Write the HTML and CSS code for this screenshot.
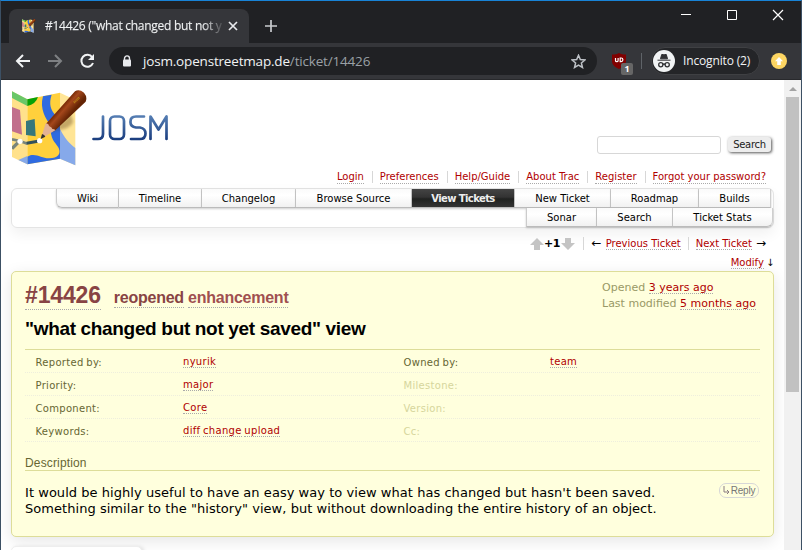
FILE: index.html
```html
<!DOCTYPE html>
<html lang="en"><head><meta charset="utf-8"><title>#14426 ("what changed but not yet saved" view) – JOSM</title><link rel="stylesheet" href="styles.css"></head>
<body>
<div class="window">
<header class="tabstrip">
  <div class="tab">
    <svg class="favicon" viewBox="0 0 76 77"><use href="#map"/></svg>
    <span class="tab-title">#14426 ("what changed but not y</span>
    <svg class="tab-close" viewBox="0 0 10 10"><path d="M1 1l8 8M9 1L1 9" stroke="#e8eaed" stroke-width="1.7"/></svg>
  </div>
  <svg class="plus" viewBox="0 0 12 12"><path d="M6 0v12M0 6h12" stroke="#c9cbce" stroke-width="1.7"/></svg>
  <div class="controls">
    <svg viewBox="0 0 12 12"><path d="M1 5.5h10" stroke="#fff"/></svg>
    <svg viewBox="0 0 12 12"><path d="M1.5 1.5h9v9h-9z" fill="none" stroke="#fff"/></svg>
    <svg viewBox="0 0 12 12"><path d="M1 1l10 10M11 1L1 11" stroke="#fff" stroke-width="1.2"/></svg>
  </div>
</header>
<div class="toolbar">
  <svg class="nav-i" viewBox="0 0 16 16"><path d="M15 8H2M8 2L2 8l6 6" fill="none" stroke="#f1f3f4" stroke-width="2"/></svg>
  <svg class="nav-i" viewBox="0 0 16 16"><path d="M1 8h13M8 2l6 6-6 6" fill="none" stroke="#7e8083" stroke-width="2"/></svg>
  <svg class="nav-i" viewBox="0 0 16 16"><path d="M13.2 4.2A6 6 0 1 0 14 10" fill="none" stroke="#f1f3f4" stroke-width="2"/><path d="M15 1v6H9z" fill="#f1f3f4"/></svg>
  <div class="omnibox">
    <svg class="lock" viewBox="0 0 10 12"><path d="M2.5 5V3.4a2.5 2.5 0 0 1 5 0V5" fill="none" stroke="#e8eaed" stroke-width="1.4"/><rect x="1" y="4.5" width="8" height="7" rx="1" fill="#e8eaed"/></svg>
    <span class="url">josm.openstreetmap.de<i>/ticket/14426</i></span>
    <svg class="star" viewBox="0 0 14 14"><path d="M7 1.2l1.7 4 4.3.4-3.3 2.8 1 4.2L7 10.4l-3.7 2.2 1-4.2L1 5.6l4.3-.4z" fill="none" stroke="#bdc1c6" stroke-width="1.4"/></svg>
  </div>
  <div class="shield">
    <svg viewBox="0 0 14 16"><path d="M7 0c2 1.2 4 1.6 7 1.6V8c0 4-3 6-7 8-4-2-7-4-7-8V1.6C3 1.6 5 1.2 7 0z" fill="#800000"/><path d="M3.500 5v2.400a1.300 1.300 0 0 0 2.600 0V5M8.200 4.400v4.200h.9a1.800 1.800 0 0 0 0-3.600h-.9" fill="none" stroke="#fff" stroke-width="1.200"/></svg>
    <b>1</b>
  </div>
  <i class="divider"></i>
  <div class="incognito">
    <svg viewBox="0 0 22 22"><circle cx="11" cy="11" r="11" fill="#f1f3f4"/><path d="M7.500 8.800l1.200-4.300h1.400l.9.400.9-.4h1.400l1.200 4.300zM4.500 10.200h13" fill="#303134" stroke="#303134"/><g fill="none" stroke="#303134" stroke-width="1.300"><circle cx="7.800" cy="14.700" r="2.100"/><circle cx="14.200" cy="14.700" r="2.100"/><path d="M9.800 14.300q1.200-.6 2.400 0"/></g></svg>
    <span>Incognito (2)</span>
  </div>
  <svg class="update" viewBox="0 0 16 16"><circle cx="8" cy="8" r="8" fill="#fdd663"/><path d="M8 4l4 4.3H9.800V12H6.200V8.300H4z" fill="#fff"/></svg>
</div>
<div class="viewport">
<main class="page">
  <div class="banner">
    <svg class="logo" viewBox="0 0 158 77">
      <defs>
        <linearGradient id="pen" gradientUnits="userSpaceOnUse" x1="150" y1="50" x2="182" y2="78"><stop offset="0" stop-color="#a8481a"/><stop offset=".2" stop-color="#7c2d08"/><stop offset=".45" stop-color="#a4471b"/><stop offset="1" stop-color="#642404"/></linearGradient>
        <linearGradient id="word" gradientUnits="userSpaceOnUse" x1="0" y1="25" x2="0" y2="51"><stop offset="0" stop-color="#5780b5"/><stop offset="1" stop-color="#173a7c"/></linearGradient>
        <filter id="soft" x="-30%" y="-30%" width="160%" height="160%"><feGaussianBlur stdDeviation="4"/></filter>
        <g id="map" transform="scale(.3333) translate(-6 -6)">
          <path d="M6 10l46 24v195L6 207z" fill="#ffe18b"/><path d="M52 34l98-20v198l-98 17z" fill="#ffd03c"/><path d="M150 14l46 22v196l-46-20z" fill="#ffe596"/>
          <path d="M6 10l46 24v20L6 30z" fill="#69c768"/><path d="M52 34l32-7q-7 22-32 27z" fill="#07a107"/>
          <path d="M6 57l24 9 6 74-30-10z" fill="#c16f8c"/><path d="M48 99l26-6 3 52-29-4z" fill="#36777b"/>
          <path d="M99 25L125 20C116 48 122 65 136 81L150 95V130L120 110C108 92 88 64 99 25z" fill="#2f6be0"/>
          <path d="M122 128L150 120V212L52 229V206C76 192 94 212 118 211C144 210 154 198 146 180C140 166 124 160 122 128z" fill="#2f6be0"/>
          <path d="M150 122C162 148 178 166 196 180V232L150 212z" fill="#86a9ea"/><path d="M25 216l27-12v25z" fill="#86a9ea"/>
          <path d="M6 182l24-24" stroke="#78847b" stroke-width="10"/><path d="M6 154l24 5 22 8" fill="none" stroke="#78847b" stroke-width="8"/><path d="M50 166l42-8" stroke="#34515a" stroke-width="9"/>
          <circle cx="30" cy="160" r="8" fill="#fff"/><circle cx="89" cy="158" r="8" fill="#fff"/>
          <path d="M120 134l62-56 8 24q-12 22-48 24z" fill="#543609" opacity=".35" filter="url(#soft)"/>
          <path d="M108 107L195 10q12-8 27 4 11 13 5 27L136 127q-8 8-14-1-5-3-8-10z" fill="url(#pen)"/>
          <path d="M107 106q9 0 10 8 10 4 10 9 7 0 9 4l-34 20-9 3 4-12z" fill="#e3b294"/><path d="M96 138q8 2 10 8l-14 7z" fill="#34322f"/>
          <path d="M192 44l16-16" stroke="#c39118" stroke-width="7" stroke-dasharray="2 2"/>
        </g>
      </defs>
      <use href="#map"/>
      <g fill="none" stroke="url(#word)" stroke-width="2.700" stroke-linejoin="round" stroke-linecap="round"><path d="M91 26.500V44q0 5-5 5h-4.500"/><rect x="98" y="26.500" width="14" height="22.500" rx="4.500"/><path d="M132 26.500h-8q-5.500 0-5.500 5v1q0 4 5.500 5h4q5.500 1 5.500 6 0 5.500-5.500 5.500h-9M138.500 49V26.500l8 13 8-13V49"/></g>
    </svg>
    <div class="search"><span class="input"></span><span class="btn">Search</span></div>
  </div>
  <nav class="meta"><span><a>Login</a></span><span><a>Preferences</a></span><span><a>Help/Guide</a></span><span><a>About Trac</a></span><span><a>Register</a></span><span><a>Forgot your password?</a></span></nav>
  <nav class="main">
    <div class="row row1"><a>Wiki</a><a>Timeline</a><a>Changelog</a><a>Browse Source</a><a class="active">View Tickets</a><a>New Ticket</a><a>Roadmap</a><a>Builds</a></div>
    <div class="row row2"><a>Sonar</a><a>Search</a><a>Ticket Stats</a></div>
  </nav>
  <div class="ctx">
    <div class="vote"><svg viewBox="0 0 14 14"><path d="M7 1l7 7h-4v5H4V8H0z" fill="#c4c4c4"/></svg><b>+1</b><svg viewBox="0 0 14 14"><path d="M7 13l7-7h-4V1H4v5H0z" fill="#c4c4c4"/></svg></div>
    <div class="prev"><span class="arrow">←</span> <a>Previous Ticket</a></div><div class="next"><a>Next Ticket</a> <span class="arrow">→</span></div>
  </div>
  <div class="modify"><a>Modify</a> <span>↓</span></div>
  <section class="ticket">
    <div class="head">
      <div class="titles">
        <div class="id"><h1><a>#14426</a></h1><h2><a>reopened</a> <a class="type">enhancement</a></h2></div>
        <h3>"what changed but not yet saved" view</h3>
      </div>
      <div class="date"><p>Opened <a>3 years ago</a></p><p>Last modified <a>5 months ago</a></p></div>
    </div>
    <div class="props">
      <div><b>Reported by:</b><span><a>nyurik</a></span><b>Owned by:</b><span><a>team</a></span></div>
      <div><b>Priority:</b><span><a>major</a></span><b class="missing">Milestone:</b></div>
      <div><b>Component:</b><span><a>Core</a></span><b class="missing">Version:</b></div>
      <div><b>Keywords:</b><span><a>diff</a> <a>change</a> <a>upload</a></span><b class="missing">Cc:</b></div>
    </div>
    <h4>Description</h4>
    <div class="body"><div class="desc"><p>It would be highly useful to have an easy way to view what has changed but hasn't been saved.</p><p>Something similar to the "history" view, but without downloading the entire history of an object.</p></div><span class="reply"><svg viewBox="0 0 7 9"><path d="M1 0v6h5M4 4l2 2-2 2" fill="none" stroke="#8a7c83"/></svg>Reply</span></div>
  </section>
  <div class="next-box"></div>
</main>
<aside class="scroll"><i class="up"></i><i class="thumb"></i></aside>
</div>
</div>
</body></html>
```
FILE: styles.css
```css
*{box-sizing:border-box}
body{margin:0;overflow:hidden;font:10px "DejaVu Sans",sans-serif;color:#000}
svg{display:block;flex:none}
h1,h2,h3,h4,p{margin:0}
.window{width:802px;height:550px;border:1px solid #3c5064;border-top-color:#1883d7;border-bottom:0;overflow:hidden;background:#202124}
.tabstrip{height:42px;display:flex;padding:8px 0 0 8px}
.tab{width:240px;height:34px;background:#35363a;border-radius:8px 8px 0 0;display:flex;align-items:center;padding:0 12px 0 13px}
.favicon{width:14px;height:14px;margin-right:9px}
.tab-title{width:178px;flex:none;white-space:nowrap;font:12px/16px "Open Sans",sans-serif;letter-spacing:-.28px;background:linear-gradient(90deg,#f1f3f4 158px,#35363a 180px);-webkit-background-clip:text;background-clip:text;color:transparent;-webkit-text-stroke:.25px transparent}
.tab-close{width:10px;height:10px;margin-left:5px}
.plus{width:12px;height:12px;margin:11px 0 0 16px}
.controls{display:flex;gap:34px;margin:0 17px 0 auto}
.controls svg{width:12px;height:12px}
.toolbar{height:37px;background:#35363a;border-bottom:1px solid #28292c;display:flex;align-items:center;padding-left:14px}
.nav-i{width:16px;height:16px;margin-right:16px}
.omnibox{width:488px;height:28px;margin-left:-2px;border-radius:14px;background:#202124;display:flex;align-items:center;padding:0 11px 0 13px}
.lock{width:10px;height:12px}
.url{font:13.5px/20px "Open Sans",sans-serif;letter-spacing:-.18px;color:#f1f3f4;margin-left:11px;white-space:nowrap}
.url i{font-style:normal;color:#9aa0a6}
.star{width:15px;height:15px;margin-left:auto}
.shield{position:relative;width:14px;height:16px;margin-left:15px}
.shield svg{width:14px;height:16px}
.shield b{position:absolute;left:9px;top:10px;width:12px;height:12px;border-radius:2px;background:#666;color:#fff;font:bold 9px/12px "Open Sans",sans-serif;text-align:center}
.divider{width:1px;height:16px;background:#5f6368;margin-left:15px}
.incognito{height:28px;width:109px;margin-left:9px;border-radius:14px;border:1px solid #3f4043;background:#242528;display:flex;align-items:center;padding-left:1px;color:#f1f3f4;font:12px/20px "Open Sans",sans-serif;letter-spacing:-.15px;white-space:nowrap}
.incognito svg{width:22px;height:22px;margin-right:8px}
.update{width:16px;height:16px;margin-left:11px}
.viewport{height:470px;display:flex;background:#fff}
.page{width:783px;height:470px;overflow:hidden;padding:10px 10px 0}
.banner{height:77px;display:flex;justify-content:space-between}
.logo{width:158px;height:77px;margin-left:1px}
.search{display:flex;margin:46px 3px 0 0;gap:7px}
.input{width:124px;height:18px;border:1px solid #d7d7d7;border-radius:3px}
.btn{width:43px;height:15px;margin-top:1px;background:#ededed;border-radius:3px;box-shadow:1px 1px 3px #555;color:#222;text-align:center;line-height:16px;letter-spacing:-.3px}
a{color:#b00000;border-bottom:1px dotted #aaa}
.meta{height:21px;display:flex;justify-content:flex-end;padding:4px 8px 0 0;line-height:12px}
.meta span{padding:0 8px 0 7px;border-left:1px solid #d7d7d7;height:12px;white-space:nowrap}
.meta span:first-child{border:0}
.meta span:last-child{padding-right:0}
.meta a{display:block;height:13px}
.main{height:40px;border:1px solid #e4e4e4;border-radius:6px;box-shadow:0 6px 14px #0000000f}
.row{display:flex;justify-content:flex-end}
.row a{height:19px;line-height:19px;color:#000;border:0;border-right:1px solid #cfcfcf;border-bottom:1px solid #bbb;box-shadow:0 1px 2px #0003;text-align:center;background:linear-gradient(#fafafa,#fff 35%,#f1f1f1);white-space:nowrap}
.row1{padding-right:2px}
.row1 a:nth-child(1){width:63px;border-left:1px solid #ccc;border-radius:0 0 0 6px}
.row1 a:nth-child(2){width:83px}.row1 a:nth-child(3){width:94px}.row1 a:nth-child(4){width:116px}
.row1 a:nth-child(5){width:103px}.row1 a:nth-child(6){width:96px}.row1 a:nth-child(7){width:88px}.row1 a:nth-child(8){width:72px}
.row .active{background:linear-gradient(#444,#333 45%,#202220 55%,#333);color:#eee;font-weight:bold;letter-spacing:-.6px}
.row2 a:nth-child(1){width:71px;border-left:1px solid #ccc}.row2 a:nth-child(2){width:76px}.row2 a:nth-child(3){width:100px;border-radius:0 0 6px 0}
.ctx{height:26px;display:flex;justify-content:flex-end;padding:9px 7px 0 0;line-height:13px;white-space:nowrap}
.ctx a,.modify a,.props a,.date a{display:inline-block;line-height:11px}
.arrow{display:inline-block;width:12px;font-size:12px;line-height:11px;text-align:center}
.vote{display:flex;padding-right:8px}
.vote svg{width:14px;height:14px}
.vote b{font-size:11px;width:17px;text-align:center;letter-spacing:-.5px}
.prev,.next{border-left:1px solid #d7d7d7;padding:0 7px 0 7px;height:13px}
.next{padding-right:0}
.modify{height:17px;text-align:right;line-height:17px}
.modify span{display:inline-block;width:7px;text-indent:-1px}
.ticket{height:266px;border:1px solid #dd9;border-radius:5px;background:#ffd;box-shadow:0 4px 16px #0000001a;padding:0 13px}
.head{height:78px;border-bottom:1px solid #dd9;display:flex;justify-content:space-between}
.id{display:flex;align-items:baseline;height:43px;padding-top:10px}
h1,h2,h3,h4{font-family:"Liberation Sans",Arial,sans-serif}
h1{font-size:23px;line-height:26px;letter-spacing:-.15px;margin-right:13px}
h1 a{display:block;height:28px;color:#844}
h2{font-size:16px;line-height:18px;letter-spacing:-.25px;white-space:nowrap}
h2 a{display:inline-block;color:#844}
h2 .type{color:#a05050}
h3{font-size:19px;line-height:27px;letter-spacing:-.33px;white-space:nowrap}
.date{width:158px;font-size:11px;line-height:16px;color:#996;padding-top:8px;white-space:nowrap}
.props div{height:23px;border-bottom:1px dotted #eed;display:grid;grid-template-columns:148px 220px 147px 1fr;align-items:center;padding:2px 0 0 10px;letter-spacing:.3px;word-spacing:-.8px}
.props b{font-weight:normal;color:#663;padding-left:.5px}
.props .missing{color:#d6d69c}
h4{font-size:12px;font-weight:normal;letter-spacing:.15px;color:#663;line-height:15px;height:29px;padding-top:14px;border-bottom:1px solid #dd9}
.body{display:flex;justify-content:space-between;padding-top:12px}
.desc{font-size:13px;line-height:16px;letter-spacing:.045px;white-space:nowrap;padding-top:2px}
.reply{width:40px;height:15px;border:1px solid #d7d7d7;border-radius:7px;display:flex;align-items:center;justify-content:center;gap:1px;margin-right:1px;font:10px "Liberation Sans",sans-serif;letter-spacing:-.2px;color:#777}
.reply svg{width:7px;height:9px}
.next-box{width:131px;height:20px;margin-top:9px;border:1px solid #eee;border-radius:5px;background:#fff;box-shadow:2px 1px 4px #0002}
.scroll{width:17px;height:470px;background:#f1f1f1;padding:7px 2px 0}
.up{display:block;width:0;margin:0 auto;border:4px solid transparent;border-top:0;border-bottom:4px solid #a3a3a3}
.thumb{display:block;height:295px;background:#c1c1c1;margin-top:6px}
```
